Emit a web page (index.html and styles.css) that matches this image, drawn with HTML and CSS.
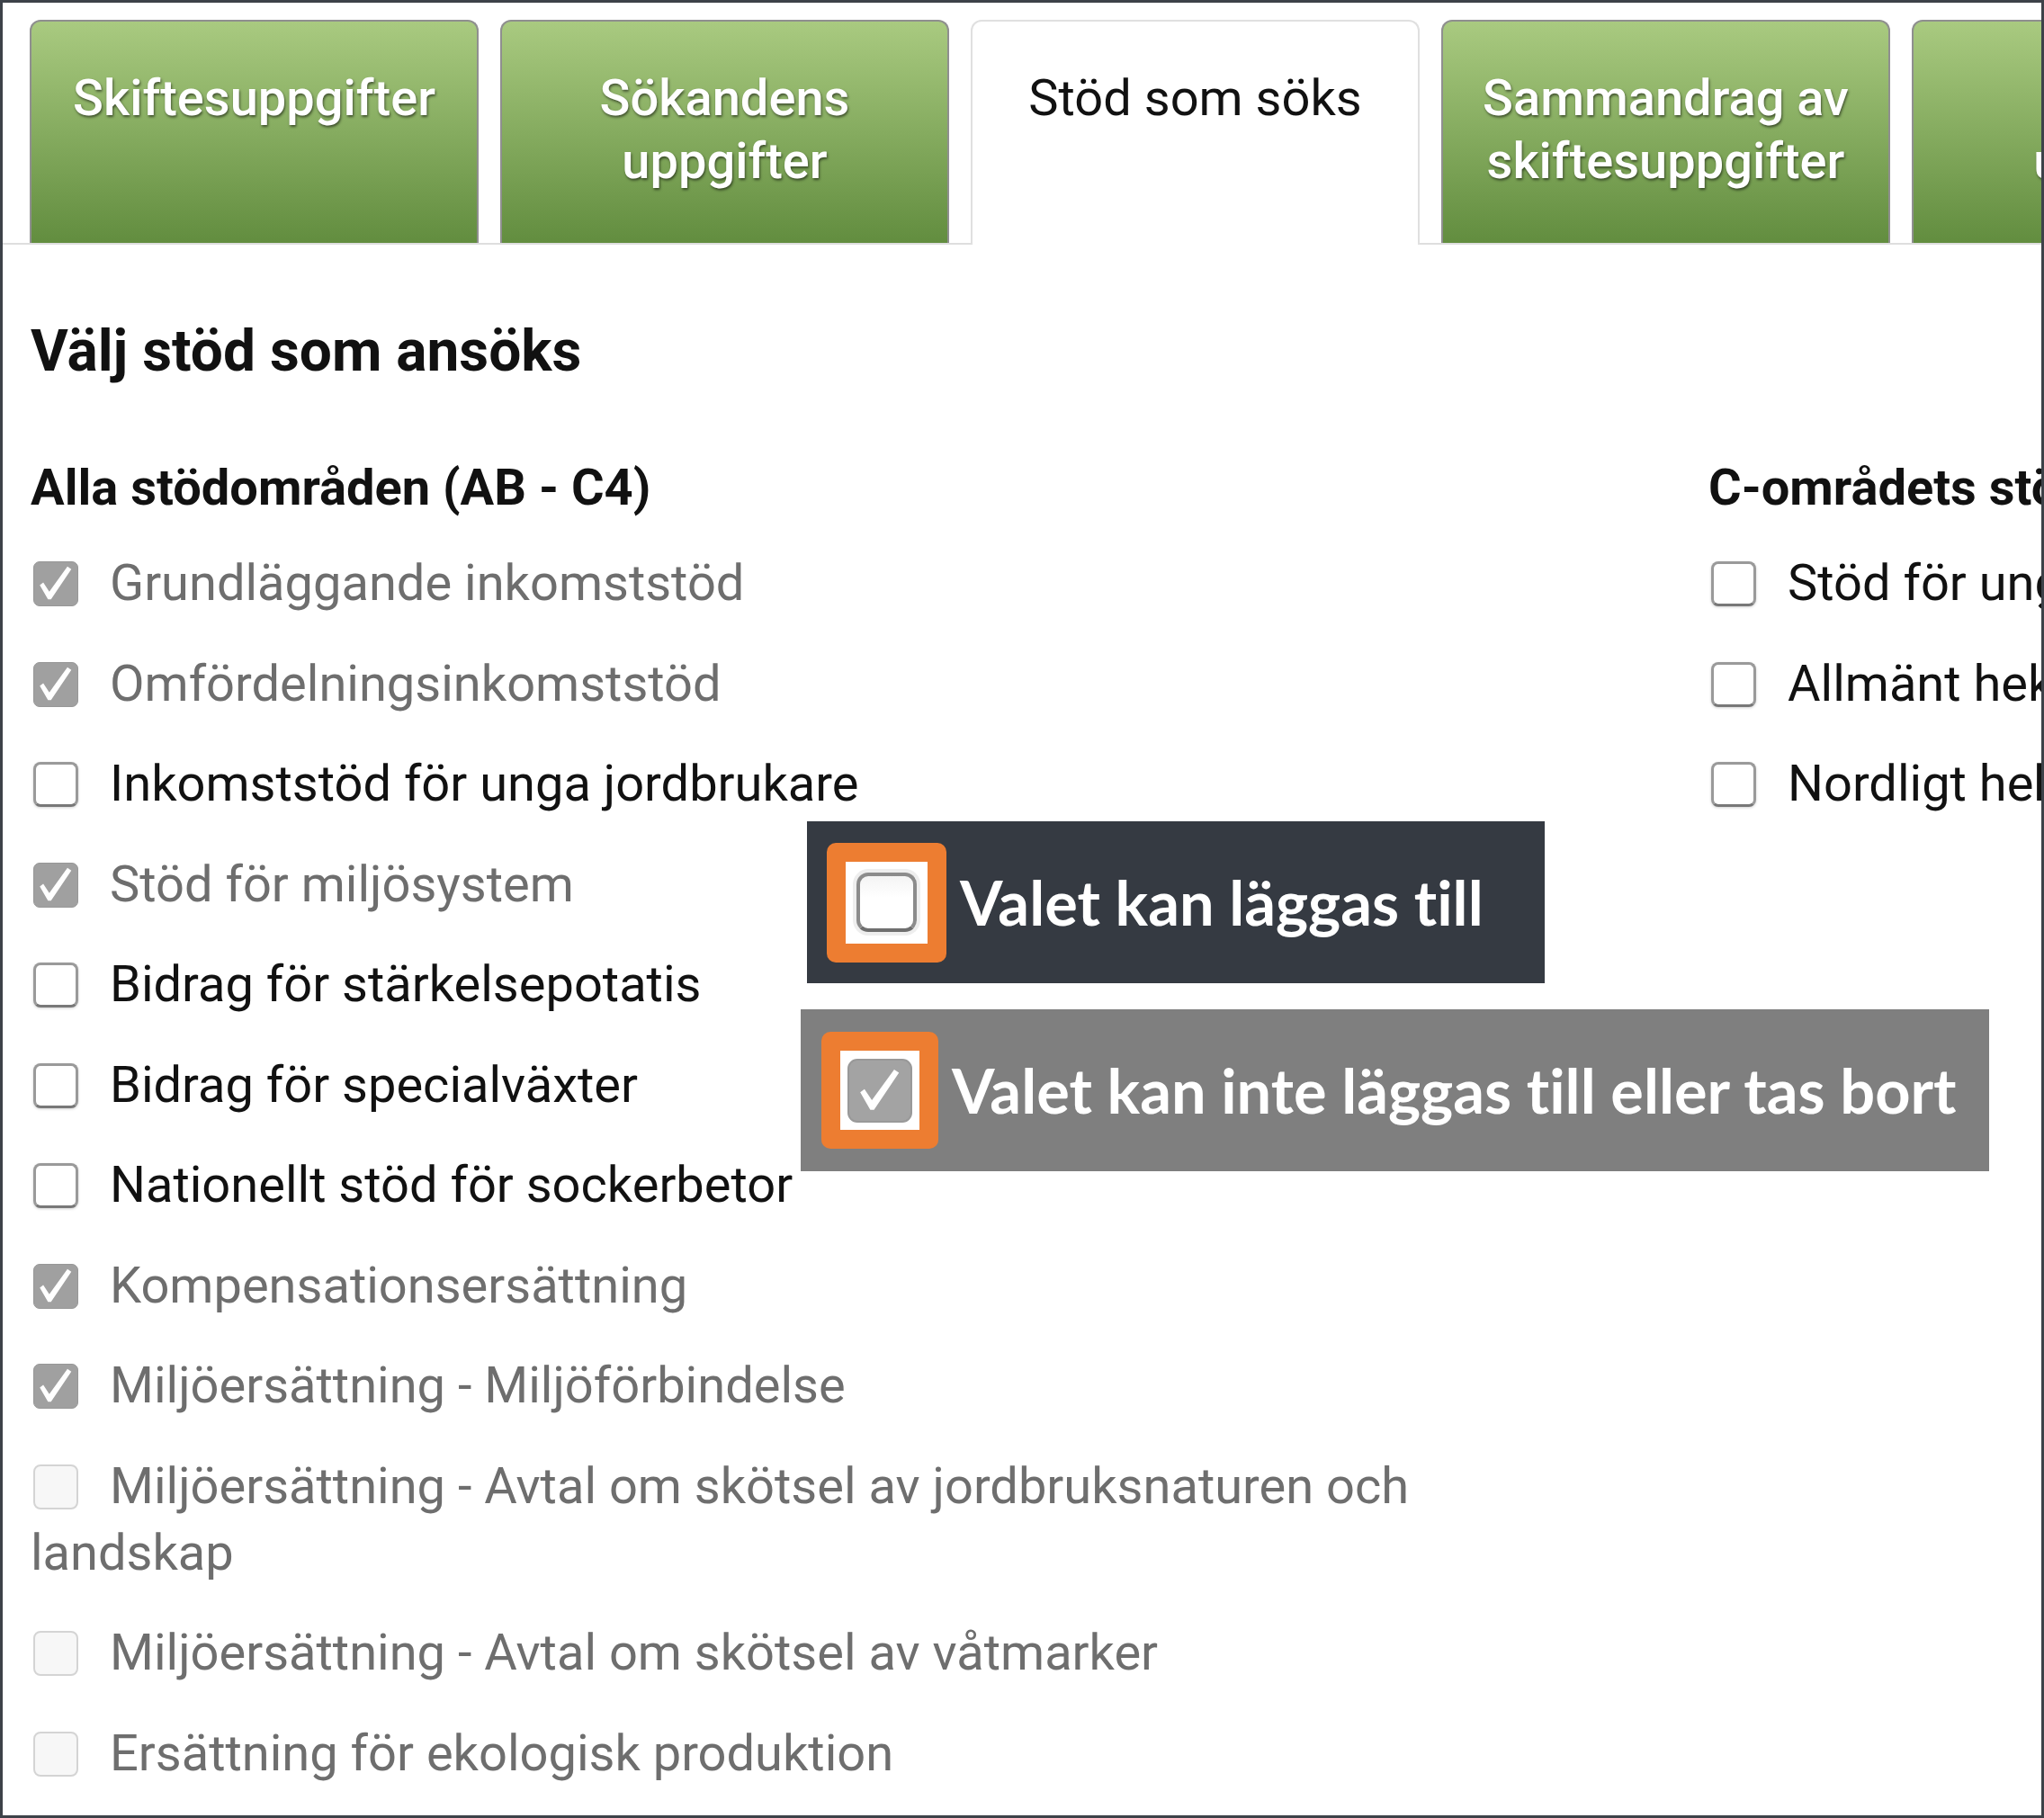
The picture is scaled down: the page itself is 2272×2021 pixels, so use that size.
FILE: index.html
```html
<!DOCTYPE html>
<html lang="sv">
<head>
<meta charset="utf-8">
<title>Stöd som söks</title>
<link rel="stylesheet" href="styles.css">
</head>
<body>
<div class="frame">
  <nav class="tabs">
    <div class="tab">Skiftesuppgifter</div>
    <div class="tab">Sökandens uppgifter</div>
    <div class="tab active">Stöd som söks</div>
    <div class="tab">Sammandrag av skiftesuppgifter</div>
    <div class="tab">Övriga<br>uppgifter</div>
  </nav>

  <main class="content">
    <h2 class="title">Välj stöd som ansöks</h2>
    <div class="columns">
      <section class="col col-left">
        <h3 class="col-title">Alla stödområden (AB - C4)</h3>
        <div class="row disabled"><span class="cb cb-locked"><svg viewBox="0 0 100 100"><path d="M13 53 L21 47 L35 68 L77 10 L86 16 L39 86 L32 86 Z"/></svg></span>Grundläggande inkomststöd</div>
        <div class="row disabled"><span class="cb cb-locked"><svg viewBox="0 0 100 100"><path d="M13 53 L21 47 L35 68 L77 10 L86 16 L39 86 L32 86 Z"/></svg></span>Omfördelningsinkomststöd</div>
        <div class="row"><span class="cb cb-open"></span>Inkomststöd för unga jordbrukare</div>
        <div class="row disabled"><span class="cb cb-locked"><svg viewBox="0 0 100 100"><path d="M13 53 L21 47 L35 68 L77 10 L86 16 L39 86 L32 86 Z"/></svg></span>Stöd för miljösystem</div>
        <div class="row"><span class="cb cb-open"></span>Bidrag för stärkelsepotatis</div>
        <div class="row"><span class="cb cb-open"></span>Bidrag för specialväxter</div>
        <div class="row"><span class="cb cb-open"></span>Nationellt stöd för sockerbetor</div>
        <div class="row disabled"><span class="cb cb-locked"><svg viewBox="0 0 100 100"><path d="M13 53 L21 47 L35 68 L77 10 L86 16 L39 86 L32 86 Z"/></svg></span>Kompensationsersättning</div>
        <div class="row disabled"><span class="cb cb-locked"><svg viewBox="0 0 100 100"><path d="M13 53 L21 47 L35 68 L77 10 L86 16 L39 86 L32 86 Z"/></svg></span>Miljöersättning - Miljöförbindelse</div>
        <div class="row disabled"><span class="cb cb-off"></span>Miljöersättning - Avtal om skötsel av jordbruksnaturen och landskap</div>
        <div class="row disabled"><span class="cb cb-off"></span>Miljöersättning - Avtal om skötsel av våtmarker</div>
        <div class="row disabled"><span class="cb cb-off"></span>Ersättning för ekologisk produktion</div>
      </section>
      <section class="col col-right">
        <h3 class="col-title">C-områdets stöd</h3>
        <div class="row"><span class="cb cb-open"></span>Stöd för unga jordbrukare</div>
        <div class="row"><span class="cb cb-open"></span>Allmänt hektarstöd</div>
        <div class="row"><span class="cb cb-open"></span>Nordligt hektarstöd</div>
      </section>
    </div>
  </main>

  <div class="legend legend-add">
    <div class="swatch">
      <div class="swatch-inner">
        <span class="demo-cb demo-open"></span>
      </div>
    </div>
    <span class="legend-text">Valet kan läggas till</span>
  </div>

  <div class="legend legend-locked">
    <div class="swatch swatch-small">
      <div class="swatch-inner swatch-inner-small">
        <span class="demo-cb demo-locked"><svg viewBox="0 0 100 100"><path d="M13 53 L21 47 L35 68 L77 10 L86 16 L39 86 L32 86 Z"/></svg></span>
      </div>
    </div>
    <span class="legend-text">Valet kan inte läggas till eller tas bort</span>
  </div>
</div>
</body>
</html>
```

FILE: styles.css
```css
html, body {
  margin: 0;
  padding: 0;
  background: #ffffff;
}

.frame {
  width: 2272px;
  height: 2021px;
  box-sizing: border-box;
  border: 3px solid #3d4249;
  position: relative;
  overflow: hidden;
  background: #ffffff;
  font-family: Roboto, "Liberation Sans", sans-serif;
  color: #111111;
}

/* ---------- tabs ---------- */
.tabs {
  display: flex;
  align-items: flex-start;
  gap: 24px;
  padding: 19px 0 0 30px;
  border-bottom: 2px solid #dedede;
}

.tab {
  flex: 0 0 499px;
  height: 248px;
  box-sizing: border-box;
  border: 2px solid #8f8f8f;
  border-bottom: none;
  border-radius: 12px 12px 0 0;
  background: linear-gradient(#a9ca80, #628d3f);
  color: #ffffff;
  text-align: center;
  font-size: 56px;
  font-weight: 500;
  line-height: 70px;
  padding: 50px 16px 0;
  text-shadow: 1px 2px 3px rgba(0, 0, 0, 0.55);
}

.tab.active {
  background: #ffffff;
  border-color: #e0e0e0;
  color: #111111;
  font-weight: 400;
  text-shadow: none;
  height: 250px;
  margin-bottom: -2px;
}

/* ---------- content ---------- */
.content {
  padding: 81px 0 0 31px;
}

.title {
  margin: 0 0 81px;
  font-size: 64px;
  font-weight: 700;
  line-height: 75px;
  color: #111111;
}

.columns {
  display: flex;
  gap: 245px;
}

.col-left {
  flex: 0 0 1620px;
}

.col-right {
  flex: 0 0 auto;
  white-space: nowrap;
}

.col-title {
  margin: 0 0 35px;
  font-size: 56px;
  font-weight: 700;
  line-height: 67px;
  color: #111111;
}

.row {
  font-size: 56px;
  line-height: 74px;
  margin-bottom: 37.5px;
  color: #111111;
}

.row.disabled {
  color: #6e6e6e;
}

/* ---------- checkboxes ---------- */
.cb {
  display: inline-block;
  box-sizing: border-box;
  width: 50px;
  height: 50px;
  margin: 0 35px 0 3px;
  vertical-align: -7px;
  border-radius: 8px;
  position: relative;
}

.cb-open {
  background: #ffffff;
  border: 3px solid #9a9a9a;
  border-bottom-color: #787878;
  box-shadow: 0 1px 3px rgba(0, 0, 0, 0.18);
}

.cb-locked {
  background: #a0a0a0;
  border: 1px solid #979797;
  border-radius: 7px;
}

.cb-off {
  background: #f7f7f7;
  border: 2px solid #d4d4d4;
}

.cb svg,
.demo-cb svg {
  display: block;
  width: 100%;
  height: 100%;
  fill: #ffffff;
}

/* ---------- legend overlays ---------- */
.legend {
  position: absolute;
  height: 180px;
  box-sizing: border-box;
  display: flex;
  align-items: center;
  gap: 15px;
  font-family: Lato, "Open Sans", sans-serif;
  font-weight: 700;
  font-size: 68.5px;
  line-height: 84px;
  font-variant-ligatures: none;
  color: #ffffff;
}

.legend-add {
  left: 894px;
  top: 910px;
  width: 820px;
  padding-left: 22px;
  background: #353a42;
}

.legend-locked {
  left: 887px;
  top: 1119px;
  width: 1321px;
  padding-left: 23px;
  background: #7f7f7f;
}

.swatch {
  flex: 0 0 auto;
  width: 133px;
  height: 133px;
  border-radius: 10px;
  background: #ed7d31;
  display: flex;
  align-items: center;
  justify-content: center;
}

.swatch-small {
  width: 130px;
  height: 130px;
}

.swatch-inner {
  width: 91px;
  height: 91px;
  background: #ffffff;
  display: flex;
  align-items: center;
  justify-content: center;
}

.swatch-inner-small {
  width: 88px;
  height: 88px;
}

.demo-cb {
  display: block;
  box-sizing: border-box;
}

.demo-open {
  width: 67px;
  height: 66px;
  border: 4px solid #8c8c8c;
  border-bottom-color: #6f6f6f;
  border-radius: 13px;
  background: linear-gradient(#f4f4f4, #ffffff 40%, #ffffff);
  box-shadow: 0 0 0 4px #eeeeee;
}

.demo-locked {
  width: 72px;
  height: 71px;
  background: #a3a3a3;
  border: 2px solid #999999;
  border-radius: 11px;
  padding: 4px;
}
```
